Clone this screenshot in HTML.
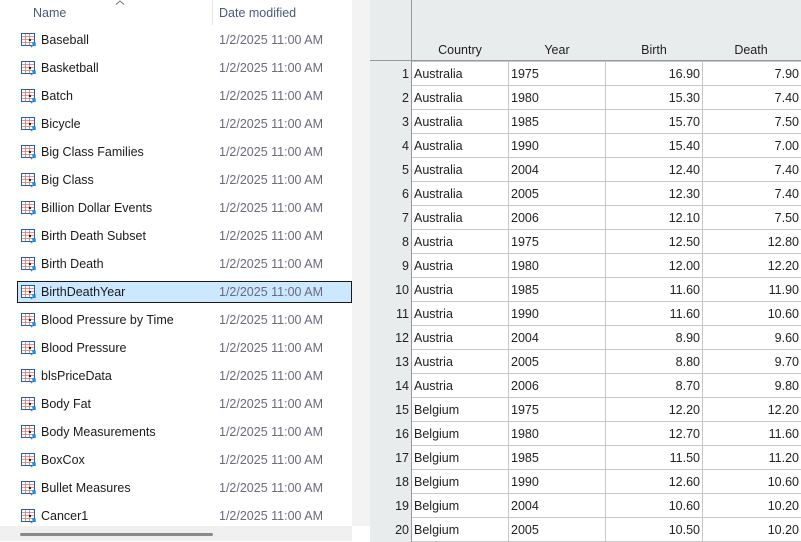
<!DOCTYPE html><html><head><style>
body{margin:0;width:801px;height:541px;overflow:hidden;font-family:"Segoe UI","Liberation Sans",sans-serif;position:relative;background:#fff}
.l{position:absolute;left:0;top:0;width:352px;height:541px;background:#fff}
.strip{position:absolute;left:352px;top:0;width:18px;height:526px;background:#f3f3f3}
.hdr{position:absolute;top:6px;font-size:12.5px;color:#4a5a7a}
.row{position:absolute;left:17px;width:335px;height:22px;font-size:12.5px;color:#1a1a1a}
.row svg{position:absolute;left:4px;top:4px}
.row .n{position:absolute;left:24px;top:4px}
.row .d{position:absolute;left:202px;top:4px;color:#6a6a7a}
.sel{background:#cce8ff;border:1px solid #1a1a1a;box-sizing:border-box}
.sel svg{left:3px;top:3px}.sel .n{left:23px;top:3px}.sel .d{left:201px;top:3px}
.g{position:absolute;left:370px;top:0;width:431px;height:541px;background:#e9ecec}
table{position:absolute;left:370px;top:61px;border-collapse:collapse;font-size:12.5px;color:#222}
td{height:23px;padding:0 2px;border:1px solid #c8c8c8;background:#fff;white-space:nowrap}
td.rh{background:#e9ecec;border:none;border-right:1px solid #999;text-align:right;width:37px}
.ch{position:absolute;top:43px;font-size:12.5px;color:#222;text-align:center}
</style></head><body>
<div class="l">
<div class="hdr" style="left:33px">Name</div>
<svg style="position:absolute;left:115px;top:0" width="10" height="5"><path d="M1 4.5L5 1L9 4.5" stroke="#777" fill="none"/></svg>
<div style="position:absolute;left:212px;top:0;width:1px;height:25px;background:#e5e5e5"></div>
<div class="hdr" style="left:219px">Date modified</div>
<div style="position:absolute;left:358px;top:65px;width:2px;height:24px;background:#888"></div>
<div id="list"></div>
<div style="position:absolute;left:0;top:526px;width:352px;height:15px;background:#f0f0f0"></div>
<div style="position:absolute;left:20px;top:533px;width:193px;height:3px;background:#8a8a8a;border-radius:2px"></div>
</div>
<div class="strip"></div>
<div class="g"></div>
<div style="position:absolute;left:411px;top:0;width:1px;height:541px;background:#999"></div>
<div style="position:absolute;left:370px;top:60px;width:431px;height:1px;background:#999"></div>
<div class="ch" style="left:412px;width:96px">Country</div>
<div class="ch" style="left:509px;width:96px">Year</div>
<div class="ch" style="left:606px;width:96px">Birth</div>
<div class="ch" style="left:703px;width:96px">Death</div>
<table id="t"></table>
<script>
var names=["Baseball","Basketball","Batch","Bicycle","Big Class Families","Big Class","Billion Dollar Events","Birth Death Subset","Birth Death","BirthDeathYear","Blood Pressure by Time","Blood Pressure","blsPriceData","Body Fat","Body Measurements","BoxCox","Bullet Measures","Cancer1"];
var ic='<svg width="16" height="15" viewBox="0 0 16 15"><rect x="0.5" y="0.5" width="13" height="12" fill="#fff" stroke="#1f5fb0"/><path d="M1 3.5H13M4.5 1V12M8.5 1V12M1 6.5H13M1 9.5H13" stroke="#e07070" stroke-width="0.8"/><rect x="8" y="6" width="2" height="2" fill="#222"/><path d="M10 14L14 10M11 10H14V13" stroke="#1f8fe0" stroke-width="1.4" fill="none"/></svg>';
var h='';names.forEach(function(n,i){var y=29+i*28;h+='<div class="row'+(i==9?' sel':'')+'" style="top:'+y+'px">'+ic+'<span class="n">'+n+'</span><span class="d">1/2/2025 11:00 AM</span></div>';});
document.getElementById('list').innerHTML=h;
var d=[["Australia",1975,"16.90","7.90"],["Australia",1980,"15.30","7.40"],["Australia",1985,"15.70","7.50"],["Australia",1990,"15.40","7.00"],["Australia",2004,"12.40","7.40"],["Australia",2005,"12.30","7.40"],["Australia",2006,"12.10","7.50"],["Austria",1975,"12.50","12.80"],["Austria",1980,"12.00","12.20"],["Austria",1985,"11.60","11.90"],["Austria",1990,"11.60","10.60"],["Austria",2004,"8.90","9.60"],["Austria",2005,"8.80","9.70"],["Austria",2006,"8.70","9.80"],["Belgium",1975,"12.20","12.20"],["Belgium",1980,"12.70","11.60"],["Belgium",1985,"11.50","11.20"],["Belgium",1990,"12.60","10.60"],["Belgium",2004,"10.60","10.20"],["Belgium",2005,"10.50","10.20"]];
var t='';d.forEach(function(r,i){t+='<tr><td class="rh">'+(i+1)+'</td><td style="width:92px;border-left:none">'+r[0]+'</td><td style="width:92px">'+r[1]+'</td><td style="width:92px;text-align:right">'+r[2]+'</td><td style="width:94px;text-align:right;border-right:none">'+r[3]+'</td></tr>';});
document.getElementById('t').innerHTML=t;
</script>
</body></html>
